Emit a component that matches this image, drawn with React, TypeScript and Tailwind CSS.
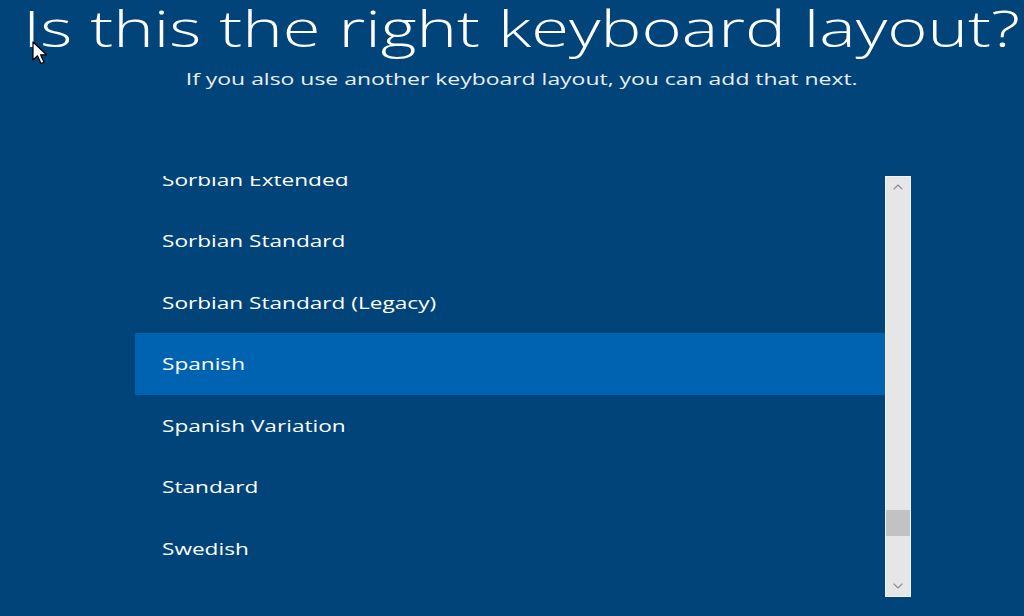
import { ChevronUp, ChevronDown } from 'lucide-react';

const layouts = [
  'Sorbian Extended',
  'Sorbian Standard',
  'Sorbian Standard (Legacy)',
  'Spanish',
  'Spanish Variation',
  'Standard',
  'Swedish',
  'Swiss French',
];

const selected = 'Spanish';

function Cursor() {
  return (
    <svg
      className="absolute left-[32px] top-[41px]"
      width="20"
      height="26"
      viewBox="0 0 20 26"
    >
      <path
        d="M1 1 L1 19 L5.5 14.8 L9 22.5 L12 21.2 L8.6 13.8 L14.5 13.8 Z"
        fill="#fff"
        stroke="#000"
        strokeWidth="1.2"
        strokeLinejoin="round"
      />
    </svg>
  );
}

export default function App() {
  return (
    <div
      className="relative w-[1024px] h-[616px] overflow-hidden bg-[#01447a] text-white"
      style={{ fontFamily: '"Open Sans", "Noto Sans", sans-serif' }}
    >
      <div className="flex flex-col items-center pl-[20px]">
        <h1 className="mt-[-4px] scale-x-[1.375] whitespace-nowrap text-[50px] font-light leading-[64px]">
          Is this the right keyboard layout?
        </h1>
        <p className="mt-[7px] scale-x-[1.39] whitespace-nowrap text-[16.5px] leading-[24px] text-[#e8eef5]">
          If you also use another keyboard layout, you can add that next.
        </p>
      </div>

      <div className="mt-[85px] ml-[135px] flex h-[421px] w-[776px]">
        <div className="flex-1 overflow-hidden">
          <ul className="-mt-[27.5px]">
            {layouts.map((name) => (
              <li
                key={name}
                className={
                  'flex h-[61.5px] items-center pl-[27px] text-[17px] ' +
                  (name === selected ? 'bg-[#0063b1]' : '')
                }
              >
                <span className="origin-left scale-x-[1.33] whitespace-nowrap">{name}</span>
              </li>
            ))}
          </ul>
        </div>
        <div className="flex w-[26px] flex-col border border-[#f2f2f2] bg-[#e6e6e6]">
          <div className="flex h-[20px] items-center justify-center text-[#8c8c8c]">
            <ChevronUp size={16} strokeWidth={1.6} />
          </div>
          <div className="flex-1" />
          <div className="h-[26px] bg-[#c2c2c2]" />
          <div className="h-[40px]" />
          <div className="flex h-[20px] items-center justify-center text-[#8c8c8c]">
            <ChevronDown size={16} strokeWidth={1.6} />
          </div>
        </div>
      </div>

      <Cursor />
    </div>
  );
}
